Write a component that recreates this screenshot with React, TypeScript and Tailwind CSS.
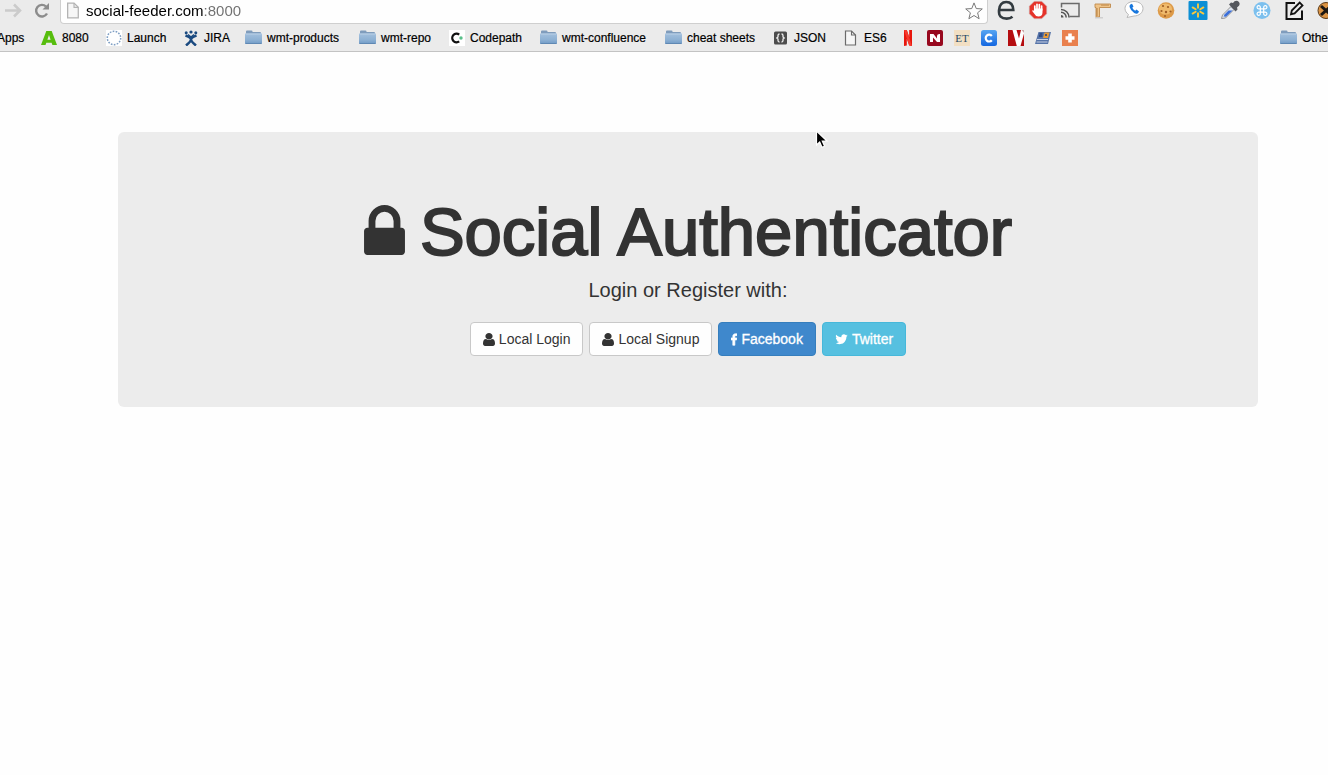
import React from "react";

const svg = "block shrink-0";

function Folder() {
  return (
    <svg viewBox="0 0 17 15" className={`${svg} h-[15px] w-[17px]`} aria-hidden="true">
      <defs>
        <linearGradient id="folderFill" x1="0" y1="0" x2="0" y2="1">
          <stop offset="0" stopColor="#a3c0dd" />
          <stop offset="0.6" stopColor="#8db0d3" />
          <stop offset="1" stopColor="#6f9ac6" />
        </linearGradient>
      </defs>
      <path d="M1 13V1.500q0-1 1-1h4.500q1 0 1 1V2H15q1 0 1 1v10z" fill="#7f9cbc" />
      <path d="M0 4Q0 3.500.6 3.500h15.800q.6 0 .6.500V13q0 1-1 1H1q-1 0-1-1z" fill="url(#folderFill)" />
      <path d="M.5 4h16" stroke="#b9d0e6" />
      <path d="M.5 13.500h16" stroke="#5f88b3" />
    </svg>
  );
}

function Page({ stroke = "#6b6b6b", className = "h-4 w-4" }: { stroke?: string; className?: string }) {
  return (
    <svg viewBox="0 0 16 16" className={`${svg} ${className}`} aria-hidden="true">
      <path d="M2.500 1h6l4 4v10h-10z" fill="#f6f6f6" stroke={stroke} strokeWidth="1.200" />
      <path d="M8.500 1v4h4" fill="none" stroke={stroke} strokeWidth="1.100" />
    </svg>
  );
}

function Mark({ children }: { children: React.ReactNode }) {
  return (
    <svg viewBox="0 0 16 16" className={`${svg} h-4 w-4`} aria-hidden="true">
      {children}
    </svg>
  );
}

const bookmarks = [
  {
    label: "8080",
    width: "w-[65px]",
    icon: (
      <Mark>
        <path d="M5.300 1h5.400L16 15h-4.600l-.8-2.300H5.300L4.500 15H0zM8 5 6.400 9.700h3.200z" fill="#57bd0e" />
      </Mark>
    ),
  },
  {
    label: "Launch",
    width: "w-[77px]",
    icon: (
      <Mark>
        <rect width="16" height="16" fill="#fff" />
        <circle cx="8" cy="8" r="6.700" fill="none" stroke="#7f9fc4" strokeWidth="1.500" strokeDasharray="1.700 1.300" />
      </Mark>
    ),
  },
  {
    label: "JIRA",
    width: "w-[62px]",
    icon: (
      <Mark>
        <circle cx="8" cy="2" r="1.600" fill="#1a4a80" />
        <circle cx="3.200" cy="2.800" r="1.500" fill="#1a4a80" />
        <circle cx="12.800" cy="2.800" r="1.500" fill="#1a4a80" />
        <path d="M2.500 5.500Q8 7.500 8 9.500t5 6M13.500 5.500Q8 7.500 8 9.500t-5 6" fill="none" stroke="#1a4a80" strokeWidth="2.500" />
        <path d="M5 4.500 8 7l3-2.500" fill="none" stroke="#1a4a80" strokeWidth="1.500" />
      </Mark>
    ),
  },
  { label: "wmt-products", width: "w-[114px]", icon: <Folder /> },
  { label: "wmt-repo", width: "w-[90px]", icon: <Folder /> },
  {
    label: "Codepath",
    width: "w-[91px]",
    icon: (
      <Mark>
        <rect width="16" height="16" fill="#fff" />
        <path d="M10.200 4.600A4.300 4.300 0 1 0 10.200 11.400" fill="none" stroke="#111" strokeWidth="2.300" />
        <circle cx="12" cy="8" r="1.700" fill="#5ac08a" />
      </Mark>
    ),
  },
  { label: "wmt-confluence", width: "w-[125px]", icon: <Folder /> },
  { label: "cheat sheets", width: "w-[108px]", icon: <Folder /> },
  {
    label: "JSON",
    width: "w-[70px]",
    icon: (
      <Mark>
        <rect x="1" y="1.500" width="13" height="13" rx="1.500" fill="#4c4c4c" />
        <path d="M6.500 4q-1.500 0-1.500 1.500V7L3.800 8 5 9v1.500Q5 12 6.500 12M8.500 4Q10 4 10 5.500V7l1.200 1L10 9v1.500Q10 12 8.500 12" fill="none" stroke="#f0f0f0" strokeWidth="1.300" />
      </Mark>
    ),
  },
  { label: "ES6", width: "w-[57px]", icon: <Page /> },
];

const favicons = [
  {
    name: "Netflix",
    icon: (
      <Mark>
        <path d="M4 0h2.800l2.400 7V0H12v16l-2.800-.4L6.800 8.800v6.800L4 16z" fill="#e8150c" />
        <path d="M4 0h2.800L12 16l-2.800-.4z" fill="#f53a2e" />
      </Mark>
    ),
  },
  {
    name: "N",
    icon: (
      <Mark>
        <rect width="16" height="16" rx="2" fill="#98091f" />
        <path d="M3 4h3.500L10 8.500V6q0-2 2.500-2H13v8h-3L6 7.500V12H3z" fill="#fff" />
      </Mark>
    ),
  },
  {
    name: "ET",
    icon: (
      <Mark>
        <rect width="16" height="16" fill="#f2dfc3" />
        <text x="8" y="12" textAnchor="middle" fontFamily="Liberation Serif, serif" fontSize="11" fill="#274a66">ET</text>
      </Mark>
    ),
  },
  {
    name: "C",
    icon: (
      <Mark>
        <defs>
          <linearGradient id="blueTile" x1="0" y1="0" x2="0" y2="1">
            <stop offset="0" stopColor="#56a5f2" />
            <stop offset="1" stopColor="#1467e0" />
          </linearGradient>
        </defs>
        <rect width="16" height="16" rx="2.500" fill="url(#blueTile)" />
        <path d="M10.800 6A3.400 3.400 0 1 0 10.800 10.200" fill="none" stroke="#fff" strokeWidth="2.200" />
      </Mark>
    ),
  },
  {
    name: "V",
    icon: (
      <Mark>
        <rect width="16" height="16" fill="#b50d10" />
        <path d="M4.500 0h4L11 8.500 13 0h3v3.500L12.500 16H8.800z" fill="#fff" />
        <path d="M13.500 0H16v3z" fill="#c9a9a9" />
      </Mark>
    ),
  },
  {
    name: "Bank",
    icon: (
      <Mark>
        <path d="M3.500 2H16l-3 12H0z" fill="#5573a8" />
        <path d="M9.500 2.500h5L13 8H8z" fill="#e79a35" />
        <path d="M4.500 4h3M4 6h3.500M10 5h2" stroke="#23407a" strokeWidth="1.400" />
        <path d="M2 9.500h11M1.500 12h11" stroke="#c8d1e4" strokeWidth="1" />
      </Mark>
    ),
  },
  {
    name: "Plus",
    icon: (
      <Mark>
        <rect width="16" height="16" fill="#e9804d" />
        <path d="M8 3.500v9M3.500 8h9" stroke="#fff" strokeWidth="3.600" />
      </Mark>
    ),
  },
];

function Ext({ children }: { children: React.ReactNode }) {
  return (
    <svg viewBox="0 0 20 20" className={`${svg} h-5 w-5`} aria-hidden="true">
      {children}
    </svg>
  );
}

const extensions = [
  {
    name: "Reader",
    icon: (
      <Ext>
        <path d="M3 10h14.300Q17 2 10.300 2T3 10.300 10.800 18.600q3.500 0 5.700-1.800" fill="none" stroke="#333b40" strokeWidth="2.600" />
      </Ext>
    ),
  },
  {
    name: "Blocker",
    icon: (
      <Ext>
        <path d="M6.300 1.200h7.400l5.100 5.100v7.400l-5.100 5.100H6.300l-5.100-5.100V6.300z" fill="#e5332a" stroke="#cfcfcf" strokeWidth=".6" />
        <path d="M6.800 10V6M9 9V4.300M11.300 9V4.500M13.600 10V6" stroke="#fff" strokeWidth="1.700" strokeLinecap="round" />
        <path d="M6 8.500h8.500v4q0 4-4.200 4-2.500 0-3.800-2.500L4 10.800q1-1.300 2 0z" fill="#fff" />
      </Ext>
    ),
  },
  {
    name: "Cast",
    icon: (
      <Ext>
        <path d="M1.500 7.500v-4H19v13H9.500" fill="none" stroke="#6a6a6a" strokeWidth="1.500" />
        <path d="M1 9.500a8 8 0 0 1 8 8M1 12.300a5.200 5.200 0 0 1 5.200 5.200" fill="none" stroke="#555" strokeWidth="1.500" />
        <path d="M1 15a2.500 2.500 0 0 1 2.500 2.500H1z" fill="#555" />
      </Ext>
    ),
  },
  {
    name: "Ruler",
    icon: (
      <Ext>
        <path d="M3 4h15.500v3.500H7.500V17H4V7.500H3z" fill="#f0c488" stroke="#c08a4c" strokeWidth=".9" />
        <path d="M10 4.500v1.500M12 4.500v1.500M14 4.500v1.500M16 4.500v1.500M4 9h2M4 11h2M4 13h2M4 15h2" stroke="#a76f30" strokeWidth=".8" />
        <path d="M3 17.800h8" stroke="#c8c8c8" strokeWidth="1.200" />
      </Ext>
    ),
  },
  {
    name: "Phone",
    icon: (
      <Ext>
        <path d="M10 1.500c5 0 9 2.800 9 7s-4 7.500-9 7.500l-7 1.500 1.500-3C2.500 13 1 11 1 8.500c0-4.200 4-7 9-7z" fill="#fff" stroke="#b9b9b9" />
        <path d="M6.300 4.500 8 3.800l1.500 2.800-1.200 1.200q.9 2 2.900 3l1.300-1.200 2.500 1.800-1 1.900q-1.500.9-3.800-.4Q6.500 10.500 5.600 7q-.3-1.700.7-2.500z" fill="#1877dd" />
      </Ext>
    ),
  },
  {
    name: "Cookies",
    icon: (
      <Ext>
        <circle cx="10" cy="10.500" r="8.300" fill="#dd9a48" />
        <ellipse cx="9.500" cy="9" rx="6.500" ry="5.500" fill="#efba6c" />
        <g fill="#a05e25">
          <circle cx="7" cy="6" r="1.100" />
          <circle cx="12" cy="7" r="1.100" />
          <circle cx="5.500" cy="11" r="1.100" />
          <circle cx="10" cy="12" r="1.200" />
          <circle cx="14.500" cy="11.500" r="1.100" />
          <circle cx="9" cy="16" r="1" />
        </g>
      </Ext>
    ),
  },
  {
    name: "Spark",
    icon: (
      <Ext>
        <rect x=".5" y="1" width="19" height="19" rx="1" fill="#0c8fd5" />
        <path d="M10 4.200v3.600M10 13.200v3.600M4.600 7.400l3.100 1.800M12.300 11.800l3.100 1.800M15.400 7.400l-3.100 1.800M7.700 11.800l-3.100 1.800" stroke="#fcc83c" strokeWidth="1.900" strokeLinecap="round" />
      </Ext>
    ),
  },
  {
    name: "Eyedropper",
    icon: (
      <Ext>
        <path d="m1.500 18.500 1-3.500L11 6.500l3 3L5.500 18z" fill="#dfe6f2" stroke="#888" strokeWidth=".9" />
        <path d="m3.500 16.500 1-2 4-4h4L6 16.700z" fill="#3c6fd8" />
        <path d="m9 4.500 2-2 2 .5L14.500 1.300q2.500-1.300 4.200.4t.3 4L17 7.500l.5 2-2 2z" fill="#55585e" />
      </Ext>
    ),
  },
  {
    name: "Shortcuts",
    icon: (
      <Ext>
        <circle cx="10" cy="10.500" r="8.500" fill="#7cc0ee" />
        <path d="M8.300 8.800h3.400v3.400H8.300zM8.300 8.800H7A1.600 1.600 0 1 1 8.300 7.300zM11.700 8.800H13A1.600 1.600 0 1 0 11.700 7.300zM8.300 12.200H7A1.600 1.600 0 1 0 8.300 13.700zM11.700 12.200H13A1.600 1.600 0 1 1 11.700 13.700z" fill="none" stroke="#fff" strokeWidth="1.200" />
      </Ext>
    ),
  },
  {
    name: "Compose",
    icon: (
      <Ext>
        <path d="M11 3H2.500v16H18v-8.500" fill="none" stroke="#111" strokeWidth="2" />
        <path d="m7 14.200.8-3.700L15.700 2.600l2.800 2.800-7.900 8z" fill="#ececec" stroke="#111" strokeWidth="1.800" />
      </Ext>
    ),
  },
  {
    name: "Swap",
    icon: (
      <Ext>
        <circle cx="10" cy="10.500" r="8" fill="#dc9444" stroke="#5b3a17" />
        <path d="m5 6 10 9M15 6 5 15" stroke="#1d1712" strokeWidth="3" />
      </Ext>
    ),
  },
];

function UserIcon() {
  return (
    <svg viewBox="256 128 1280 1536" className={`${svg} h-[13px] w-3`} preserveAspectRatio="none" fill="currentColor" aria-hidden="true">
      <path d="M1536 1399q0 109-62.500 187t-150.500 78h-854q-88 0-150.500-78t-62.500-187q0-85 8.500-160.500t31.500-152 58.500-131 94-89 134.500-34.500q131 128 313 128t313-128q76 0 134.500 34.500t94 89 58.500 131 31.500 152 8.500 160.500zm-256-887q0 159-112.500 271.500t-271.500 112.500-271.500-112.500-112.500-271.500 112.500-271.500 271.500-112.500 271.500 112.500 112.500 271.500z" />
    </svg>
  );
}

function FacebookIcon() {
  return (
    <svg viewBox="479 0 864 1664" className={`${svg} h-[13px] w-[6px]`} fill="currentColor" stroke="currentColor" strokeWidth="90" aria-hidden="true">
      <path d="M1343 12v264h-157q-86 0-116 36t-30 108v189h293l-39 296h-254v759h-306v-759h-255v-296h255v-218q0-186 104-288.500t277-102.500q147 0 228 12z" />
    </svg>
  );
}

function TwitterIcon() {
  return (
    <svg viewBox="64 256 1664 1344" className={`${svg} h-[11px] w-[13px]`} fill="currentColor" aria-hidden="true">
      <path d="M1684 408q-67 98-162 167 1 14 1 42 0 130-38 259.500t-115.500 248.500-184.500 210.500-258 146-323 54.500q-271 0-496-145 35 4 78 4 225 0 401-138-105-2-188-64.500t-114-159.500q33 5 61 5 43 0 85-11-112-23-185.500-111.500t-73.500-205.500v-4q68 38 146 41-66-44-105-115t-39-154q0-88 44-163 121 149 294.500 238.500t371.500 99.500q-8-38-8-74 0-134 94.500-228.500t228.500-94.500q140 0 236 102 109-21 205-78-37 115-142 178 93-10 186-50z" />
    </svg>
  );
}

const light = "border-[#c8c8c8] bg-[#fefefe] text-[#333]";
const logins = [
  { label: "Local Login", icon: <UserIcon />, tone: light },
  { label: "Local Signup", icon: <UserIcon />, tone: light },
  { label: "Facebook", icon: <FacebookIcon />, tone: "border-[#357ebd] bg-[#3f88cc] text-white [-webkit-text-stroke:0.3px_white]" },
  { label: "Twitter", icon: <TwitterIcon />, tone: "border-[#46b8da] bg-[#56c0e0] text-white [-webkit-text-stroke:0.3px_white]" },
];

function BrowserBar() {
  return (
    <header className="overflow-hidden border-b border-[#c3c3c3] bg-[#ebebeb] text-black">
      <div className="-mr-[14px] flex h-6 items-start">
        <div className="flex w-[60px] shrink-0 gap-2 pl-1">
          <button aria-label="Forward" className="h-5 w-5">
            <svg viewBox="0 0 20 20" className="h-5 w-5" fill="none" stroke="#cbcbcb" strokeWidth="2.600">
              <path d="M1 10.500h14M10 4.500l6 6-6 6" />
            </svg>
          </button>
          <button aria-label="Reload" className="h-5 w-5">
            <svg viewBox="0 0 20 20" className="h-5 w-5" fill="none" stroke="#8c8c8c" strokeWidth="2.400">
              <path d="M15 13.500A5.800 5.800 0 1 1 14 6.500" />
              <path d="M17 3v6.500h-6.500z" fill="#8c8c8c" stroke="none" />
            </svg>
          </button>
        </div>
        <div className="flex h-6 min-w-0 flex-1 items-center rounded-b-sm border-x border-b border-[#cfcfcf] bg-[#fefefe] pr-1 pb-[2px] pl-1">
          <Page stroke="#b3b3b3" className="h-[17px] w-[17px]" />
          <input
            aria-label="Address"
            defaultValue="social-feeder.com:8000"
            className="ml-1 h-6 min-w-0 flex-1 bg-[linear-gradient(to_right,#000_118px,#6f6f6f_118px)] bg-clip-text text-[15px] text-transparent outline-none"
          />
          <button aria-label="Bookmark this page">
            <svg viewBox="0 0 20 20" className="h-[18px] w-[18px]" fill="#fefefe" stroke="#777" strokeWidth="1.100">
              <path d="m10 1 2.500 6.300 6.700.4-5.200 4.300 1.700 6.600L10 15l-5.700 3.600L6 12 .8 7.700l6.700-.4z" />
            </svg>
          </button>
        </div>
        <ul className="flex shrink-0 pl-[2px]">
          {extensions.map((e) => (
            <li key={e.name} className="flex w-8 justify-center">
              <button aria-label={e.name}>{e.icon}</button>
            </li>
          ))}
        </ul>
      </div>
      <nav aria-label="Bookmarks" className="flex h-[27px] items-center text-xs whitespace-nowrap [-webkit-text-stroke:0.2px_black]">
        <a href="#" className="-ml-[3px] w-11 shrink-0">Apps</a>
        {bookmarks.map((b) => (
          <a key={b.label} href="#" className={`flex shrink-0 items-center gap-[5px] ${b.width}`}>
            {b.icon}
            {b.label}
          </a>
        ))}
        <div className="flex shrink-0 gap-[11px]">
          {favicons.map((f) => (
            <a key={f.name} href="#" aria-label={f.name}>{f.icon}</a>
          ))}
        </div>
        <a href="#" className="ml-auto flex w-12 shrink-0 items-center gap-[5px]">
          <Folder />
          Othe
        </a>
      </nav>
    </header>
  );
}

export default function App() {
  return (
    <div className="min-h-screen bg-[#fefefe] font-['Liberation_Sans',Arial,sans-serif] text-[#333]">
      <BrowserBar />
      <main className="pt-20 pr-[70px] pl-[118px]">
        <section className="relative flex flex-col items-center rounded-md bg-[#ececec] pt-[67px] pb-[51px]">
          <h1 className="flex items-center gap-[15px] text-[67px] leading-[66px] [-webkit-text-stroke:2px_#333]">
            <svg viewBox="0 128 1152 1408" className={`${svg} mb-1 h-[50px] w-[41px]`} fill="#333" stroke="none" aria-hidden="true">
              <path d="M320 768h512v-192q0-106-75-181t-181-75-181 75-75 181v192zM1152 864v576q0 40-28 68t-68 28h-960q-40 0-68-28t-28-68v-576q0-40 28-68t68-28h32v-192q0-184 132-316t316-132 316 132 132 316v192h32q40 0 68 28t28 68z" />
            </svg>
            Social Authenticator
          </h1>
          <p className="mt-[10px] text-xl leading-[30px]">Login or Register with:</p>
          <div className="mt-[17px] flex gap-[6px]">
            {logins.map((l) => (
              <a
                key={l.label}
                href="#"
                className={`flex h-[34px] items-center gap-1 rounded border px-3 text-sm ${l.tone}`}
              >
                {l.icon}
                {l.label}
              </a>
            ))}
          </div>
          <svg viewBox="0 0 14 20" className="absolute -top-[2px] left-[697px] h-5 w-[14px]" aria-hidden="true">
            <path d="M1.500 1v14l3.200-3 2.300 5.300 2.600-1.100L7.300 11H12z" fill="#000" stroke="#fff" strokeWidth="1.200" />
          </svg>
        </section>
      </main>
    </div>
  );
}
